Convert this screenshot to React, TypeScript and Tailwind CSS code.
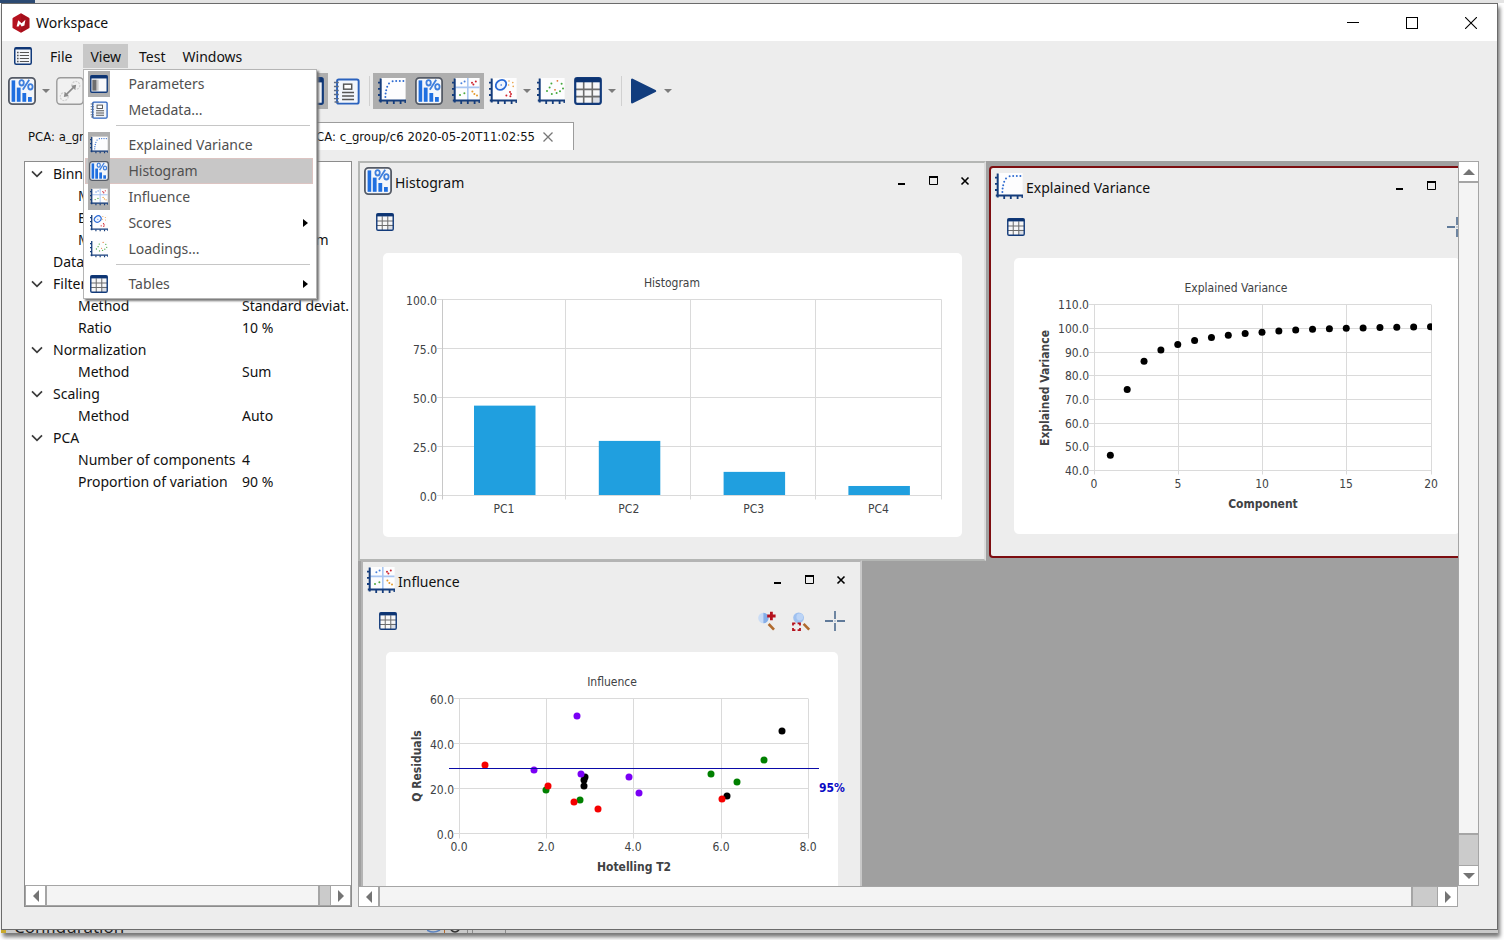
import React from "react";

type IconProps = { className?: string };

/* ---------- icons ---------- */

function Logo() {
  return (
    <svg viewBox="0 0 20 20" className="h-5 w-5" aria-hidden="true">
      <path d="M10 1.4 17.4 5.6v8.8L10 18.6 2.6 14.4V5.6Z" fill="#b5121f" stroke="#b5121f" strokeWidth="2.2" strokeLinejoin="round" />
      <path d="M10 0.8 18.2 5.4v9L10 19.2Z" fill="#7d0c16" opacity=".3" />
      <path d="M5.600 13.600 7.200 7.200l3.400 3 3.800-3.400-1 5.800-2.800 1-1.600-2.600-1.400 2.600Z" fill="#fff" />
    </svg>
  );
}

function ListIcon({ className }: IconProps) {
  return (
    <svg viewBox="0 0 18 18" className={className} aria-hidden="true">
      <rect x="0.75" y="0.75" width="16.5" height="16.5" rx="1.5" fill="#f4f6fa" stroke="#123a7a" strokeWidth="1.5" />
      <path d="M1 1.600h16" stroke="#0f3573" strokeWidth="1.800" />
      <path d="M5.800 5.500h9.200M5.800 8.500h9.200M5.800 11.500h9.200M5.800 14.500h9.200" stroke="#555" strokeWidth="1.100" />
      <path d="M3 5.500h1.600M3 8.500h1.600M3 11.500h1.600M3 14.500h1.600" stroke="#555" strokeWidth="1.300" />
    </svg>
  );
}

function HistogramIcon({ className }: IconProps) {
  return (
    <svg viewBox="0 0 28 28" className={className} aria-hidden="true">
      <rect x="0.9" y="0.9" width="26.2" height="26.2" rx="3.6" fill="#f3f6fb" stroke="#555b66" strokeWidth="1.8" />
      <g fill="#1f6fe0">
        <rect x="3.6" y="3.4" width="3.6" height="21.4" />
        <rect x="8.8" y="10.6" width="3.8" height="14.2" />
        <rect x="14.4" y="16" width="3.8" height="8.8" />
        <rect x="20" y="20" width="3.8" height="4.8" />
      </g>
      <g fill="none" stroke="#3f7fdd" strokeWidth="1.8">
        <ellipse cx="13.6" cy="5.8" rx="2.2" ry="2.7" />
        <ellipse cx="22.4" cy="9.8" rx="2.2" ry="2.7" />
        <path d="M21.2 2.8 14.8 12.8" />
      </g>
    </svg>
  );
}

function Axes({ className, children }: { className?: string; children: React.ReactNode }) {
  return (
    <svg viewBox="0 0 28 28" className={className} aria-hidden="true">
      <rect x="3" y="1" width="24.6" height="22" fill="#fdfdfe" />
      {children}
      <g stroke="#153d7c" fill="none">
        <path d="M2.7 1.5V25.4M0.8 23.6H28" strokeWidth="2" />
        <path d="M0 5.6h2.5M0 11.8h2.5M0 18h2.5M9.2 24v3M15.8 24v3M22.6 24v3" strokeWidth="1.8" />
        <path d="M27.2 24v2" strokeWidth="1.4" />
      </g>
    </svg>
  );
}

function Dots({ points, fill, r = 1 }: { points: number[][]; fill: string; r?: number }) {
  return (
    <g fill={fill}>
      {points.map(([x, y]) => (
        <circle key={`${x}-${y}`} cx={x} cy={y} r={r} />
      ))}
    </g>
  );
}

function VarianceIcon({ className }: IconProps) {
  return (
    <Axes className={className}>
      <Dots fill="#2e6bd0" points={[[7.4, 20], [7.6, 16.6], [8.2, 13.2], [9.2, 9.8], [11, 6.4], [14.6, 4.2], [18.2, 4], [21.8, 4], [25.4, 4]]} />
    </Axes>
  );
}

function InfluenceIcon({ className }: IconProps) {
  return (
    <Axes className={className}>
      <path d="M15.8 1v22M3.5 10.4h24" stroke="#a9c6f2" strokeWidth="1.6" />
      <Dots fill="#4b83dc" points={[[9.4, 6.2], [12.6, 4.6]]} />
      <Dots fill="#cc2330" points={[[20, 5.8], [23.8, 4.4], [21.4, 7.4]]} />
      <Dots fill="#4ba83a" points={[[8, 18], [12.4, 16.2]]} />
      <Dots fill="#e59a2b" points={[[20.4, 14.6], [22.4, 17], [25, 18.4]]} />
    </Axes>
  );
}

function ScoresIcon({ className }: IconProps) {
  return (
    <Axes className={className}>
      <ellipse cx="12" cy="7.8" rx="5.6" ry="4.6" transform="rotate(-38 12 7.8)" fill="#f1f6ff" stroke="#2a6ad6" strokeWidth="1.8" />
      <Dots fill="#2a6ad6" points={[[12.2, 8]]} r={0.8} />
      <Dots fill="#e8a24a" points={[[20, 4], [23.8, 5.6], [19.6, 8], [24.2, 9.4]]} r={0.8} />
      <Dots fill="#d2202c" points={[[17.4, 18.4], [21, 15], [21.4, 19.2], [22, 17]]} />
    </Axes>
  );
}

function LoadingsIcon({ className }: IconProps) {
  return (
    <Axes className={className}>
      <Dots fill="#45a83c" points={[[10, 14], [12.6, 10.4], [14.4, 6.4], [24.6, 6.8], [26, 11.4], [23, 14.2], [19.6, 16], [14.8, 17]]} />
      <Dots fill="#e0712c" points={[[20.4, 3.8], [18, 12.8]]} r={0.9} />
    </Axes>
  );
}

function TableIcon({ className }: IconProps) {
  return (
    <svg viewBox="0 0 28 28" className={className} aria-hidden="true">
      <rect x="1.2" y="1.2" width="25.6" height="25.6" rx="2" fill="#f7f7f8" />
      <path d="M18 18h8v8h-8z" fill="#dcdfe6" />
      <path d="M9.7 5v22M18.3 5v22M1 12.4h26M1 19.6h26" stroke="#6d6d6d" strokeWidth="1.6" />
      <rect x="1.2" y="1.2" width="25.6" height="25.6" rx="2" fill="none" stroke="#123a7a" strokeWidth="2.2" />
      <path d="M1 3.2h26" stroke="#0d3472" strokeWidth="4.2" />
    </svg>
  );
}

function NotebookIcon({ className }: IconProps) {
  return (
    <svg viewBox="0 0 28 28" className={className} aria-hidden="true">
      <rect x="4.2" y="1.6" width="22.4" height="25" rx="1.8" fill="#f2f6fc" stroke="#2b62bd" strokeWidth="2" />
      <path d="M1 4.6h5M1 8.8h5M1 13h5M1 17.2h5M1 21.4h5M1.6 24.8h4.4" stroke="#5c6b84" strokeWidth="1.5" />
      <rect x="11" y="6.4" width="8.4" height="5.2" fill="#fff" stroke="#555" strokeWidth="1.5" />
      <path d="M9.4 15h12.4M9.4 18.6h12.4M9.4 22.2h12.4" stroke="#555" strokeWidth="1.6" />
    </svg>
  );
}

function PanelIcon({ className }: IconProps) {
  return (
    <svg viewBox="0 0 28 28" className={className} aria-hidden="true">
      <rect x="1.2" y="1.2" width="25.6" height="25.6" rx="1.6" fill="#f8f9fb" />
      <path d="M3.6 7.4h6.8v17H3.6z" fill="#6e6e6e" />
      <path d="M10.4 7.4h3v17h-3z" fill="#c9c9c9" />
      <rect x="1.2" y="1.2" width="25.6" height="25.6" rx="1.6" fill="none" stroke="#123a7a" strokeWidth="2.2" />
      <path d="M1 3.2h26" stroke="#0d3472" strokeWidth="4.4" />
    </svg>
  );
}

function LinkNodesIcon({ className }: IconProps) {
  return (
    <svg viewBox="0 0 28 28" className={className} aria-hidden="true">
      <rect x="0.8" y="0.8" width="26.4" height="26.4" rx="3.6" fill="#f1f1f1" stroke="#9b9b9b" strokeWidth="1.4" />
      <g fill="none" stroke="#cfcfcf" strokeWidth="1.2">
        <circle cx="8.2" cy="19.6" r="4" strokeDasharray="2 1" />
        <circle cx="19.8" cy="8.4" r="4" strokeDasharray="2 1" />
      </g>
      <path d="M9.400 18.400 18.600 9.400" stroke="#8b8b8b" strokeWidth="1.600" />
      <path d="m7.800 20 1-5 4 4Zm12.400-12.200-1 5-4-4Z" fill="#8b8b8b" />
    </svg>
  );
}

function PlayIcon({ className }: IconProps) {
  return (
    <svg viewBox="0 0 28 28" className={className} aria-hidden="true">
      <path d="M2.200 2.800v22.400L25 14Z" fill="#123d7e" stroke="#123d7e" strokeWidth="2.400" strokeLinejoin="round" />
    </svg>
  );
}

function CrosshairIcon() {
  return (
    <svg viewBox="0 0 20 20" className="h-5 w-5" aria-hidden="true">
      <path d="M10 0v8M10 12v8M0 10h8M12 10h8" stroke="#607a99" strokeWidth="1.8" />
      <circle cx="10" cy="10" r="0.8" fill="#8aa0b8" />
    </svg>
  );
}

function ZoomInIcon() {
  return (
    <svg viewBox="0 0 20 20" className="h-5 w-5" aria-hidden="true">
      <circle cx="6.4" cy="7" r="5.2" fill="#c9dcf6" />
      <path d="M6.4 1.8a5.2 5.2 0 0 1 0 10.4Z" fill="#86aee8" />
      <path d="M11.6 13 17 18.6" stroke="#b06a2e" strokeWidth="2.6" />
      <path d="M14.4 0.8v8.4M10.2 5h8.4" stroke="#b5111d" strokeWidth="2.8" />
    </svg>
  );
}

function ZoomFitIcon() {
  return (
    <svg viewBox="0 0 20 20" className="h-5 w-5" aria-hidden="true">
      <circle cx="7.6" cy="6.8" r="5.4" fill="#9fc1f0" />
      <circle cx="8.8" cy="6" r="3.4" fill="#bcd4f6" />
      <path d="M12.6 12.8 18.2 18.6" stroke="#b06a2e" strokeWidth="2.6" />
      <path d="M2 14.600V12.400h2.400M6.600 12.400H9v2.200M2 17v2.200h2.400M6.600 19.200H9V17" stroke="#b5111d" strokeWidth="1.800" fill="none" />
    </svg>
  );
}

/* ---------- small controls ---------- */

function Arrow({ dir }: { dir: "up" | "down" | "left" | "right" }) {
  const paths = {
    up: "M0 9 6 3l6 6Z",
    down: "M0 3h12L6 9Z",
    left: "M9 0v12L3 6Z",
    right: "M3 0v12l6-6Z",
  };
  return (
    <svg viewBox="0 0 12 12" className="h-3 w-3" aria-hidden="true">
      <path d={paths[dir]} fill="#747474" />
    </svg>
  );
}

function Caret({ label }: { label: string }) {
  return (
    <button type="button" aria-label={label} className="flex h-9 w-[11px] items-center justify-center">
      <svg viewBox="0 0 8 4" className="h-1 w-2" aria-hidden="true">
        <path d="M0 0h8L4 4Z" fill="#7c7c7c" />
      </svg>
    </button>
  );
}

function ToolButton({ label, pressed, children }: { label: string; pressed?: boolean; children: React.ReactNode }) {
  return (
    <button
      type="button"
      aria-label={label}
      aria-pressed={pressed}
      className={`flex h-9 w-[37px] items-center justify-center ${pressed ? "bg-[#aeaeae]" : ""}`}
    >
      {children}
    </button>
  );
}

function ScrollBar({ vertical, grow }: { vertical?: boolean; grow: string }) {
  const line = "border-[#a5a5a5]";
  if (vertical) {
    return (
      <div className={`flex w-[21px] shrink-0 flex-col border ${line} bg-[#cbcbcb]`}>
        <button type="button" aria-label="Scroll up" className={`flex h-[21px] items-center justify-center border-b-2 ${line} bg-white`}>
          <Arrow dir="up" />
        </button>
        <div className={`flex-1 border-b-2 ${line} bg-[#f4f4f4]`} />
        <div className={grow} />
        <button type="button" aria-label="Scroll down" className={`flex h-5 items-center justify-center border-t ${line} bg-white`}>
          <Arrow dir="down" />
        </button>
      </div>
    );
  }
  return (
    <div className={`flex h-[21px] shrink-0 border ${line} bg-[#cbcbcb]`}>
      <button type="button" aria-label="Scroll left" className={`flex w-[21px] items-center justify-center border-r-2 ${line} bg-white`}>
        <Arrow dir="left" />
      </button>
      <div className={`flex-1 border-r-2 ${line} bg-[#f4f4f4]`} />
      <div className={grow} />
      <button type="button" aria-label="Scroll right" className={`flex w-5 items-center justify-center border-l ${line} bg-white`}>
        <Arrow dir="right" />
      </button>
    </div>
  );
}

/* ---------- view menu ---------- */

function MenuItem({ label, icon, checked, active, submenu }: { label: string; icon: React.ReactNode; checked?: boolean; active?: boolean; submenu?: boolean }) {
  return (
    <button
      type="button"
      role="menuitem"
      className={`ml-px mr-[3px] flex h-[26px] items-center border pl-[2px] pr-1 text-left text-[#505050] ${active ? "border-[#dcc4c2] bg-[#c8c7c7]" : "border-transparent"}`}
    >
      <span className={`-my-px flex h-[26px] w-[22px] items-center justify-center ${checked ? "bg-[#aeaeae]" : ""}`}>{icon}</span>
      <span className="flex-1 pl-[18px]">{label}</span>
      {submenu && (
        <svg viewBox="0 0 5 8" className="h-2 w-[5px]" aria-hidden="true">
          <path d="M0 0v8l5-4Z" fill="#000" />
        </svg>
      )}
    </button>
  );
}

function MenuLine() {
  return <div className="mb-[6px] ml-8 mr-[6px] mt-[2px] h-px bg-[#c6c6c6]" />;
}

function ViewMenu() {
  const icon = "h-[18px] w-[18px]";
  return (
    <div role="menu" className="absolute left-0 top-[25px] z-20 flex w-[234px] flex-col border border-[#b5b5b5] bg-white py-px shadow-[2px_2px_2px_#777]">
      <MenuItem label="Parameters" checked icon={<PanelIcon className={icon} />} />
      <MenuItem label="Metadata..." icon={<NotebookIcon className={icon} />} />
      <MenuLine />
      <MenuItem label="Explained Variance" checked icon={<VarianceIcon className={icon} />} />
      <MenuItem label="Histogram" checked active icon={<HistogramIcon className="h-5 w-5" />} />
      <MenuItem label="Influence" checked icon={<InfluenceIcon className={icon} />} />
      <MenuItem label="Scores" submenu icon={<ScoresIcon className={icon} />} />
      <MenuItem label="Loadings..." icon={<LoadingsIcon className={icon} />} />
      <MenuLine />
      <MenuItem label="Tables" submenu icon={<TableIcon className={icon} />} />
    </div>
  );
}

/* ---------- parameter tree ---------- */

type Row = { label: string; value?: string; group?: boolean; leaf?: boolean };

const rows: Row[] = [
  { label: "Binning", group: true },
  { label: "Method", value: "Uniform" },
  { label: "Bin size", value: "0.1" },
  { label: "Method", value: "By maximum" },
  { label: "Data", leaf: true },
  { label: "Filtering", group: true },
  { label: "Method", value: "Standard deviat." },
  { label: "Ratio", value: "10 %" },
  { label: "Normalization", group: true },
  { label: "Method", value: "Sum" },
  { label: "Scaling", group: true },
  { label: "Method", value: "Auto" },
  { label: "PCA", group: true },
  { label: "Number of components", value: "4" },
  { label: "Proportion of variation", value: "90 %" },
];

function ParameterTree() {
  return (
    <aside className="flex w-[328px] shrink-0 flex-col border border-[#8c8c8c] bg-white pt-px">
      <table className="w-full table-fixed border-collapse">
        <colgroup>
          <col className="w-[217px]" />
          <col />
        </colgroup>
        <tbody>
          {rows.map((row, i) => (
            <tr key={i} className="h-[22px]">
              {row.group || row.leaf ? (
                <td colSpan={2} className="p-0">
                  <div className="flex items-center">
                    <span className="flex w-[28px] pl-[6px]">
                      {row.group && (
                        <svg viewBox="0 0 12 8" className="h-2 w-3" aria-hidden="true">
                          <path d="M1 1.4 6 6.4l5-5" fill="none" stroke="#3c3c3c" strokeWidth="1.7" />
                        </svg>
                      )}
                    </span>
                    {row.label}
                  </div>
                </td>
              ) : (
                <>
                  <td className="whitespace-nowrap p-0 pl-[53px]">{row.label}</td>
                  <td className="whitespace-nowrap p-0">{row.value}</td>
                </>
              )}
            </tr>
          ))}
        </tbody>
      </table>
      <div className="flex-1" />
      <ScrollBar grow="w-[10px]" />
    </aside>
  );
}

/* ---------- charts ---------- */

const labelFont = "font-['DejaVu_Sans_Condensed','DejaVu_Sans',sans-serif] text-[12px]";
const grid = "#dadada";
const ink = "#404244";

function HistogramChart() {
  const bars = [
    { name: "PC1", value: 45.6 },
    { name: "PC2", value: 27.6 },
    { name: "PC3", value: 11.8 },
    { name: "PC4", value: 4.6 },
  ];
  const left = 59;
  const bottom = 242;
  const step = 124.8;
  return (
    <svg width="579" height="284" className={`block overflow-visible ${labelFont}`} fill={ink} role="img" aria-label="Histogram">
      <text x="289" y="34" textAnchor="middle">Histogram</text>
      {[100, 75, 50, 25, 0].map((v, i) => (
        <g key={v}>
          <path d={`M${left - 5} ${46.5 + i * 49}H558.5`} stroke={grid} />
          <text x={left - 5} y={52 + i * 49} textAnchor="end">{v.toFixed(1)}</text>
        </g>
      ))}
      {[0, 1, 2, 3, 4].map((i) => (
        <path key={i} d={`M${Math.floor(left + i * step) + (i === 0 || i === 4 ? 0.5 : -0.5)} 46.5V246.5`} stroke={i === 0 ? "#c8c8c8" : grid} />
      ))}
      {bars.map((b, i) => (
        <g key={b.name}>
          <rect x={left + i * step + 32} y={bottom - b.value * 1.96} width="61.5" height={b.value * 1.96} fill="#209fdf" />
          <text x={left + i * step + 62} y="260" textAnchor="middle">{b.name}</text>
        </g>
      ))}
    </svg>
  );
}

function VarianceChart() {
  const values = [46.2, 74, 86, 90.7, 93, 94.7, 96, 97, 97.7, 98.2, 98.8, 99.2, 99.5, 99.7, 99.9, 100, 100.2, 100.3, 100.4, 100.5];
  const left = 80;
  const yOf = (v: number) => 212 - (v - 40) * 2.366;
  return (
    <svg width="444" height="275" className={`block overflow-visible ${labelFont}`} fill={ink} role="img" aria-label="Explained Variance">
      <defs>
        <clipPath id="variance-plot">
          <rect x="80" y="40" width="338" height="180" />
        </clipPath>
      </defs>
      <text x="222" y="34" textAnchor="middle">Explained Variance</text>
      {[110, 100, 90, 80, 70, 60, 50, 40].map((v) => (
        <g key={v}>
          <path d={`M${left - 5} ${Math.round(yOf(v)) + 0.5}H417`} stroke={grid} />
          <text x={left - 5} y={Math.round(yOf(v)) + 5} textAnchor="end">{v.toFixed(1)}</text>
        </g>
      ))}
      {[0, 5, 10, 15, 20].map((v) => (
        <g key={v}>
          <path d={`M${Math.floor(left + v * 16.85) + 0.5} 46.5V216.5`} stroke={grid} />
          <text x={Math.floor(left + v * 16.85)} y="230" textAnchor="middle">{v}</text>
        </g>
      ))}
      <g fill="#000" clipPath="url(#variance-plot)">
        {values.map((v, i) => (
          <circle key={i} cx={left - 0.5 + (i + 1) * 16.85} cy={yOf(v)} r="3.5" />
        ))}
      </g>
      <text x="249" y="250" textAnchor="middle" fontWeight="bold">Component</text>
      <text transform="translate(35 130) rotate(-90)" textAnchor="middle" fontWeight="bold">Explained Variance</text>
    </svg>
  );
}

function InfluenceChart() {
  const series = [
    { color: "#008000", points: [[378, 108], [325, 122], [351, 130], [160, 138], [194, 148]] },
    { color: "#000000", points: [[396, 79], [199, 125], [198, 128], [198, 134], [341, 144]] },
    { color: "#7a00f5", points: [[191, 64], [148, 118], [195, 122], [243, 125], [253, 141]] },
    { color: "#f50000", points: [[99, 113], [162, 134], [188, 150], [212, 157], [336, 147]] },
  ];
  return (
    <svg width="452" height="275" className={`block overflow-visible ${labelFont}`} fill={ink} role="img" aria-label="Influence">
      <text x="226" y="34" textAnchor="middle">Influence</text>
      {[60, 40, 20, 0].map((v, i) => (
        <g key={v}>
          <path d={`M68 ${46.5 + i * 45}H422`} stroke={grid} />
          <text x="68" y={52 + i * 45} textAnchor="end">{v.toFixed(1)}</text>
        </g>
      ))}
      {[0, 2, 4, 6, 8].map((v) => (
        <g key={v}>
          <path d={`M${Math.round(73 + v * 43.6) + 0.5} 46.5V186.5`} stroke={grid} />
          <text x={Math.round(73 + v * 43.6)} y="199" textAnchor="middle">{v.toFixed(1)}</text>
        </g>
      ))}
      {series.map((s) => (
        <Dots key={s.color} points={s.points} fill={s.color} r={3.5} />
      ))}
      <path d="M63 116.5H433" stroke="#0a0aa8" />
      <text x="446" y="140" textAnchor="middle" fontWeight="bold" fill="#0a0ac4">95%</text>
      <text x="248" y="219" textAnchor="middle" fontWeight="bold">Hotelling T2</text>
      <text transform="translate(35 114) rotate(-90)" textAnchor="middle" fontWeight="bold">Q Residuals</text>
    </svg>
  );
}

/* ---------- inner windows ---------- */

type SubWindowProps = { title: string; place: string; icon: React.ReactNode; tools?: React.ReactNode; children: React.ReactNode };

function SubWindow({ title, place, icon, tools, children }: SubWindowProps) {
  const button = "flex h-7 w-8 items-center justify-center";
  return (
    <section className={`absolute flex flex-col border-2 bg-[#ededed] pt-1 ${place}`}>
      <header className="flex h-7 items-center pl-1 pr-[3px]">
        {icon}
        <h2 className="flex-1 pl-[3px] pt-[3px]">{title}</h2>
        <button type="button" aria-label={`Minimize ${title}`} className={button}>
          <svg viewBox="0 0 12 12" className="h-3 w-3" aria-hidden="true"><path d="M3 9h7" stroke="#000" strokeWidth="2" /></svg>
        </button>
        <button type="button" aria-label={`Maximize ${title}`} className={button}>
          <svg viewBox="0 0 12 12" className="h-3 w-3" aria-hidden="true"><path d="M2.5 2v7.5h8V2" fill="none" stroke="#000" /><path d="M2 2h9" stroke="#000" strokeWidth="2" /></svg>
        </button>
        <button type="button" aria-label={`Close ${title}`} className={button}>
          <svg viewBox="0 0 12 12" className="h-3 w-3" aria-hidden="true"><path d="m2.5 2.5 7 7m0-7-7 7" stroke="#000" strokeWidth="1.6" /></svg>
        </button>
      </header>
      <div className="flex h-[58px] items-center pb-1 pl-4 pr-2">
        <button type="button" aria-label={`${title} table`} className="mr-auto">
          <TableIcon className="h-[18px] w-[18px]" />
        </button>
        {tools}
      </div>
      <div className="mb-[22px] ml-[23px] mr-[22px] flex-1 rounded-[5px] bg-white">{children}</div>
    </section>
  );
}

function PlotTool({ label, children }: { label: string; children: React.ReactNode }) {
  return (
    <button type="button" aria-label={label} className="flex h-7 w-[34px] items-center justify-center">
      {children}
    </button>
  );
}

function Desktop() {
  const big = "h-7 w-7";
  const cross = <PlotTool label="Track values"><CrosshairIcon /></PlotTool>;
  return (
    <main className="flex min-w-0 flex-1 flex-col">
      <div className="flex min-h-0 flex-1">
        <div className="relative min-w-0 flex-1 overflow-hidden bg-[#a0a0a0]">
          <SubWindow title="Histogram" place="left-0 top-0 h-[400px] w-[628px] border-[#b4b6b4] border-r-[#dcdcdc]" icon={<HistogramIcon className={big} />}>
            <HistogramChart />
          </SubWindow>
          <SubWindow title="Explained Variance" place="left-[631px] top-[5px] h-[392px] w-[495px] rounded-sm border-[#7d0d10]" icon={<VarianceIcon className={big} />} tools={cross}>
            <VarianceChart />
          </SubWindow>
          <SubWindow
            title="Influence"
            place="left-[3px] top-[399px] h-[392px] w-[501px] border-[#b4b4b4] border-r-[#c8c8c8]"
            icon={<InfluenceIcon className={big} />}
            tools={
              <>
                <PlotTool label="Zoom in"><ZoomInIcon /></PlotTool>
                <PlotTool label="Zoom to fit"><ZoomFitIcon /></PlotTool>
                {cross}
              </>
            }
          >
            <InfluenceChart />
          </SubWindow>
        </div>
        <ScrollBar vertical grow="h-[30px]" />
      </div>
      <div className="mr-[21px]">
        <ScrollBar grow="w-6" />
      </div>
    </main>
  );
}

/* ---------- application window ---------- */

function TitleBar() {
  const button = "flex h-full w-[52px] items-center justify-center";
  return (
    <header className="flex h-[37px] shrink-0 items-center bg-white pl-[9px]">
      <Logo />
      <h1 className="flex-1 pl-[5px]">Workspace</h1>
      <div className="flex h-full gap-[7px]">
        <button type="button" aria-label="Minimize" className={button}>
          <svg viewBox="0 0 12 12" className="h-3 w-3" aria-hidden="true"><path d="M0 5.5h12" stroke="#000" /></svg>
        </button>
        <button type="button" aria-label="Maximize" className={button}>
          <svg viewBox="0 0 12 12" className="h-3 w-3" aria-hidden="true"><rect x="0.5" y="0.5" width="11" height="11" fill="none" stroke="#000" /></svg>
        </button>
        <button type="button" aria-label="Close" className={button}>
          <svg viewBox="0 0 12 12" className="h-3 w-3" aria-hidden="true"><path d="m0 0 12 12M12 0 0 12" stroke="#000" strokeWidth="1.1" /></svg>
        </button>
      </div>
    </header>
  );
}

function MenuBar() {
  const item = "h-6 px-[7px] pt-px";
  return (
    <nav className="flex h-[31px] shrink-0 items-start pl-3 pt-[3px]">
      <button type="button" aria-label="Window list" className="mr-[11px] flex h-6 items-center">
        <ListIcon className="h-[18px] w-[18px]" />
      </button>
      <button type="button" className={`${item} mr-1`}>File</button>
      <div className="relative">
        <button type="button" aria-haspopup="menu" aria-expanded="true" className={`${item} bg-[#c8c8c8]`}>View</button>
        <ViewMenu />
      </div>
      <button type="button" className={`${item} ml-1`}>Test</button>
      <button type="button" className={`${item} ml-[3px]`}>Windows</button>
    </nav>
  );
}

function ToolBar() {
  const icon = "h-7 w-7";
  const line = "ml-1 mr-[3px] h-[30px] w-px bg-[#d0d0d0]";
  return (
    <div role="toolbar" className="mt-px flex h-9 shrink-0 items-center pl-px">
      <ToolButton label="New analysis"><HistogramIcon className={icon} /></ToolButton>
      <Caret label="New analysis options" />
      <ToolButton label="Connect"><LinkNodesIcon className={icon} /></ToolButton>
      <div className="w-[203px]" />
      <ToolButton label="Parameters" pressed><PanelIcon className={icon} /></ToolButton>
      <ToolButton label="Metadata"><NotebookIcon className="h-[27px] w-[27px]" /></ToolButton>
      <div className={line} />
      <ToolButton label="Explained Variance" pressed><VarianceIcon className={icon} /></ToolButton>
      <ToolButton label="Histogram" pressed><HistogramIcon className={icon} /></ToolButton>
      <ToolButton label="Influence" pressed><InfluenceIcon className={icon} /></ToolButton>
      <ToolButton label="Scores"><ScoresIcon className={icon} /></ToolButton>
      <Caret label="Scores options" />
      <ToolButton label="Loadings"><LoadingsIcon className={icon} /></ToolButton>
      <ToolButton label="Tables"><TableIcon className={icon} /></ToolButton>
      <Caret label="Tables options" />
      <div className={line} />
      <ToolButton label="Run"><PlayIcon className={icon} /></ToolButton>
      <Caret label="Run options" />
    </div>
  );
}

function Tabs() {
  return (
    <div role="tablist" className="mt-[13px] flex h-7 shrink-0 pl-[18px] font-['DejaVu_Sans_Condensed','DejaVu_Sans',sans-serif] text-[13px]">
      <button type="button" role="tab" aria-selected="false" className="w-[280px] px-2 pt-[2px] text-left">PCA: a_group</button>
      <div className="flex items-center border-r border-t border-[#9c9c9c] bg-white pl-[9px] pr-5">
        <button type="button" role="tab" aria-selected="true">PCA: c_group/c6 2020-05-20T11:02:55</button>
        <button type="button" aria-label="Close tab" className="ml-2">
          <svg viewBox="0 0 10 10" className="h-[10px] w-[10px]" aria-hidden="true"><path d="m0.5 0.5 9 9m0-9-9 9" stroke="#777" strokeWidth="1.3" /></svg>
        </button>
      </div>
    </div>
  );
}

export default function App() {
  return (
    <div className="flex h-screen flex-col overflow-hidden bg-white font-['Noto_Sans','Open_Sans',sans-serif] text-[14px] leading-[22px] text-[#111]">
      <div className="flex h-[3px] shrink-0 bg-[#e4e4e4]">
        <div className="w-[35px] bg-[#2c4a73]" />
      </div>
      <div className="ml-px mr-[6px] flex min-h-0 flex-1 flex-col shadow-[2px_4px_4px_#777]">
        <div className="flex min-h-0 flex-1 flex-col border border-[#6b6b6b] bg-[#ededed]">
          <TitleBar />
          <MenuBar />
          <ToolBar />
          <Tabs />
          <div className="mb-[22px] mt-[11px] flex min-h-0 flex-1 gap-[6px] pl-[22px] pr-[18px]">
            <ParameterTree />
            <Desktop />
          </div>
        </div>
        <div className="flex h-[3px] shrink-0 items-end overflow-hidden bg-[#c9c9c9]">
          <div className="mr-2 h-full w-[5px] bg-[#c9a92c]" />
          <span className="text-[17px] leading-[13px] text-[#222]">Configuration</span>
          <svg viewBox="0 0 82 3" className="ml-[303px] h-[3px] w-[82px]" aria-hidden="true">
            <path d="M0 0q6 4 13 0" fill="none" stroke="#5b82bf" strokeWidth="1.6" />
            <path d="M17.500 0v3" stroke="#b5692a" />
            <path d="M24 0q4 4 8 0" fill="none" stroke="#333" strokeWidth="1.6" />
            <path d="M40.500 0v3M45.500 0v3M78.500 0v3" stroke="#8a8a8a" />
          </svg>
        </div>
      </div>
      <div className="h-[7px] shrink-0" />
    </div>
  );
}
